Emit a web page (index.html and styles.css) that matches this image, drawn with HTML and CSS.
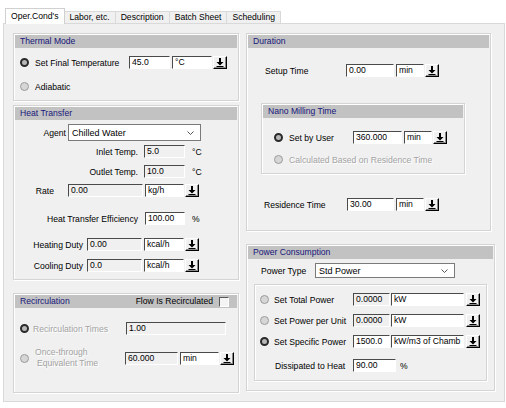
FILE: index.html
```html
<!DOCTYPE html>
<html>
<head>
<meta charset="utf-8">
<link rel="stylesheet" href="styles.css">
</head>
<body>
<div class="window">
  <div class="tabstrip">
    <div class="tab active">Oper.Cond's</div>
    <div class="tab">Labor, etc.</div>
    <div class="tab">Description</div>
    <div class="tab">Batch Sheet</div>
    <div class="tab">Scheduling</div>
  </div>
  <div class="panel">
    <div class="col col-left">
      <section class="group thermal">
        <div class="ghead">Thermal Mode</div>
        <div class="row th-r1">
          <span class="radio on"></span>
          <span class="lbl l-final">Set Final Temperature</span>
          <span class="fld w41">45.0</span>
          <span class="fld u40">°C</span>
          <span class="dd"><svg width="8" height="9" viewBox="0 0 8 9"><path d="M3 0h2v4h2.5L4 7.5 0.5 4H3z M0.5 8h7v1h-7z" fill="#000"/></svg></span>
        </div>
        <div class="row th-r2">
          <span class="radio"></span>
          <span class="lbl l-after-radio">Adiabatic</span>
        </div>
      </section>

      <section class="group heat">
        <div class="ghead">Heat Transfer</div>
        <div class="row agent">
          <span class="lbl rl w51">Agent</span>
          <span class="select sel-agent">Chilled Water<svg width="7" height="4" viewBox="0 0 7 4"><path d="M0.5 0.5L3.5 3.5 6.5 0.5" stroke="#555" fill="none"/></svg></span>
        </div>
        <div class="row ht-inlet">
          <span class="lbl rl w123">Inlet Temp.</span>
          <span class="fld dis w41 g6">5.0</span>
          <span class="unit-txt">°C</span>
        </div>
        <div class="row ht-outlet">
          <span class="lbl rl w123">Outlet Temp.</span>
          <span class="fld dis w41 g6">10.0</span>
          <span class="unit-txt">°C</span>
        </div>
        <div class="row ht-rate">
          <span class="lbl rl w39">Rate</span>
          <span class="fld dis w75 g14">0.00</span>
          <span class="fld u39">kg/h</span>
          <span class="dd"><svg width="8" height="9" viewBox="0 0 8 9"><path d="M3 0h2v4h2.5L4 7.5 0.5 4H3z M0.5 8h7v1h-7z" fill="#000"/></svg></span>
        </div>
        <div class="row ht-eff">
          <span class="lbl rl w123">Heat Transfer Efficiency</span>
          <span class="fld w40 g7">100.00</span>
          <span class="unit-txt">%</span>
        </div>
        <div class="row ht-heat">
          <span class="lbl rl w68">Heating Duty</span>
          <span class="fld dis w55 g4">0.00</span>
          <span class="fld u40">kcal/h</span>
          <span class="dd"><svg width="8" height="9" viewBox="0 0 8 9"><path d="M3 0h2v4h2.5L4 7.5 0.5 4H3z M0.5 8h7v1h-7z" fill="#000"/></svg></span>
        </div>
        <div class="row ht-cool">
          <span class="lbl rl w68">Cooling Duty</span>
          <span class="fld dis w55 g4">0.0</span>
          <span class="fld u40">kcal/h</span>
          <span class="dd"><svg width="8" height="9" viewBox="0 0 8 9"><path d="M3 0h2v4h2.5L4 7.5 0.5 4H3z M0.5 8h7v1h-7z" fill="#000"/></svg></span>
        </div>
      </section>

      <section class="group recirc">
        <div class="ghead split">
          <span>Recirculation</span>
          <span class="flow">Flow Is Recirculated<span class="check"></span></span>
        </div>
        <div class="row rc-r1">
          <span class="radio on"></span>
          <span class="lbl disabled l-times">Recirculation Times</span>
          <span class="fld dis w100">1.00</span>
        </div>
        <div class="row rc-r2">
          <span class="radio"></span>
          <span class="lbl disabled l-once"><span class="line">Once-through</span><span class="line ind">Equivalent Time</span></span>
          <span class="fld dis w53">60.000</span>
          <span class="fld u39">min</span>
          <span class="dd"><svg width="8" height="9" viewBox="0 0 8 9"><path d="M3 0h2v4h2.5L4 7.5 0.5 4H3z M0.5 8h7v1h-7z" fill="#000"/></svg></span>
        </div>
      </section>
    </div>

    <div class="col col-right">
      <section class="group duration">
        <div class="ghead">Duration</div>
        <div class="row du-setup">
          <span class="lbl w81">Setup Time</span>
          <span class="fld w48">0.00</span>
          <span class="fld u28">min</span>
          <span class="dd"><svg width="8" height="9" viewBox="0 0 8 9"><path d="M3 0h2v4h2.5L4 7.5 0.5 4H3z M0.5 8h7v1h-7z" fill="#000"/></svg></span>
        </div>
        <section class="group nano">
          <div class="ghead">Nano Milling Time</div>
          <div class="row na-user">
            <span class="radio on"></span>
            <span class="lbl l-user">Set by User</span>
            <span class="fld w49">360.000</span>
            <span class="fld u28">min</span>
            <span class="dd"><svg width="8" height="9" viewBox="0 0 8 9"><path d="M3 0h2v4h2.5L4 7.5 0.5 4H3z M0.5 8h7v1h-7z" fill="#000"/></svg></span>
          </div>
          <div class="row na-calc">
            <span class="radio"></span>
            <span class="lbl disabled l-after-radio">Calculated Based on Residence Time</span>
          </div>
        </section>
        <div class="row du-res">
          <span class="lbl w83">Residence Time</span>
          <span class="fld w47">30.00</span>
          <span class="fld u28">min</span>
          <span class="dd"><svg width="8" height="9" viewBox="0 0 8 9"><path d="M3 0h2v4h2.5L4 7.5 0.5 4H3z M0.5 8h7v1h-7z" fill="#000"/></svg></span>
        </div>
      </section>

      <section class="group power">
        <div class="ghead">Power Consumption</div>
        <div class="row pw-type">
          <span class="lbl w54">Power Type</span>
          <span class="select sel-power">Std Power<svg width="7" height="4" viewBox="0 0 7 4"><path d="M0.5 0.5L3.5 3.5 6.5 0.5" stroke="#555" fill="none"/></svg></span>
        </div>
        <div class="inner">
          <div class="row pw-total">
            <span class="radio"></span>
            <span class="lbl l-pw">Set Total Power</span>
            <span class="fld dis w37">0.0000</span>
            <span class="fld u73">kW</span>
            <span class="dd"><svg width="8" height="9" viewBox="0 0 8 9"><path d="M3 0h2v4h2.5L4 7.5 0.5 4H3z M0.5 8h7v1h-7z" fill="#000"/></svg></span>
          </div>
          <div class="row pw-unit">
            <span class="radio"></span>
            <span class="lbl l-pw">Set Power per Unit</span>
            <span class="fld dis w37">0.0000</span>
            <span class="fld u73">kW</span>
            <span class="dd"><svg width="8" height="9" viewBox="0 0 8 9"><path d="M3 0h2v4h2.5L4 7.5 0.5 4H3z M0.5 8h7v1h-7z" fill="#000"/></svg></span>
          </div>
          <div class="row pw-spec">
            <span class="radio on"></span>
            <span class="lbl l-pw">Set Specific Power</span>
            <span class="fld w37">1500.0</span>
            <span class="fld u73">kW/m3 of Chamb</span>
            <span class="dd"><svg width="8" height="9" viewBox="0 0 8 9"><path d="M3 0h2v4h2.5L4 7.5 0.5 4H3z M0.5 8h7v1h-7z" fill="#000"/></svg></span>
          </div>
          <div class="row pw-diss">
            <span class="lbl w78">Dissipated to Heat</span>
            <span class="fld w43">90.00</span>
            <span class="unit-txt pct">%</span>
          </div>
        </div>
      </section>
    </div>
  </div>
</div>
</body>
</html>
```

FILE: styles.css
```css
html, body {
  margin: 0;
  background: #fff;
}
body {
  font-family: "Liberation Sans", Arial, sans-serif;
  font-size: 8.6px;
  color: #000;
}
.window {
  width: 506px;
  height: 408px;
  overflow: hidden;
}

/* tabs */
.tabstrip {
  display: flex;
  align-items: flex-end;
  height: 23px;
  padding-left: 5px;
  box-sizing: border-box;
}
.tab {
  box-sizing: border-box;
  height: 12px;
  line-height: 10px;
  padding: 0 5px;
  border: 1px solid #d9d9d9;
  border-bottom: none;
  background: #f0f0f0;
  margin-left: -1px;
  white-space: nowrap;
}
.tab.active {
  height: 16px;
  line-height: 14px;
  margin-left: 0;
  margin-bottom: -1px;
  background: #fff;
  border-color: #d0d0d0;
  position: relative;
  z-index: 1;
}

/* panel */
.panel {
  box-sizing: border-box;
  width: 502px;
  height: 379px;
  margin-left: 3px;
  border: 1px solid #d9d9d9;
  background: #f0f0f0;
  display: flex;
  align-items: flex-start;
  padding: 9px 0 0 9px;
}
.col {
  display: flex;
  flex-direction: column;
}
.col-left { width: 226px; }
.col-right { width: 249px; margin-left: 7px; }

/* group boxes */
.group {
  box-sizing: border-box;
  border: 1px solid #d4d4d4;
  padding: 1px;
  box-shadow: inset 1px 1px 0 #fff, 1px 1px 0 #fff;
}
.ghead {
  height: 13px;
  line-height: 13px;
  background: #c2c2c2;
  color: #16167a;
  padding-left: 5px;
  white-space: nowrap;
}
.ghead.split {
  display: flex;
  justify-content: space-between;
  align-items: center;
}
.flow {
  display: flex;
  align-items: center;
  color: #000;
}
.check {
  box-sizing: border-box;
  width: 10px;
  height: 10px;
  margin: 0 8px 0 6px;
  background: #f4f4f4;
  border: 1px solid;
  border-color: #5a5a5a #fff #fff #5a5a5a;
}

.thermal { height: 68px; }
.heat { height: 175px; margin-top: 4px; }
.recirc { height: 100px; margin-top: 13px; }
.duration { width: 245px; height: 198px; }
.power { width: 249px; height: 147px; margin-top: 13px; }
.nano {
  width: 204px;
  height: 71px;
  margin: 26px 0 0 13px;
}
.inner {
  box-sizing: border-box;
  width: 233px;
  height: 97px;
  margin: 6px 0 0 6px;
  border: 1px solid #d4d4d4;
  box-shadow: inset 1px 1px 0 #fff, 1px 1px 0 #fff;
}

/* rows */
.row {
  display: flex;
  align-items: center;
  height: 13px;
  white-space: nowrap;
}
.th-r1 { margin-top: 8px; padding-left: 5px; }
.th-r2 { margin-top: 11px; padding-left: 5px; }

.agent { margin-top: 4px; height: 17px; }
.ht-inlet { margin-top: 4px; }
.ht-outlet { margin-top: 7px; }
.ht-rate { margin-top: 6px; }
.ht-eff { margin-top: 15px; }
.ht-heat { margin-top: 13px; }
.ht-cool { margin-top: 8px; }

.rc-r1 { margin-top: 14px; padding-left: 5px; }
.rc-r2 { margin-top: 11px; height: 24px; padding-left: 5px; }

.du-setup { margin-top: 16px; padding-left: 17px; }
.na-user { margin-top: 13px; padding-left: 11px; }
.na-calc { margin-top: 9px; padding-left: 11px; }
.du-res { margin-top: 24px; padding-left: 16px; }

.pw-type { margin-top: 4px; height: 15px; padding-left: 13px; }
.pw-total { margin-top: 8px; padding-left: 5px; }
.pw-unit { margin-top: 8px; padding-left: 5px; }
.pw-spec { margin-top: 8px; padding-left: 5px; }
.pw-diss { margin-top: 11px; padding-left: 20px; }

/* labels */
.lbl { display: inline-block; }
.rl { text-align: right; }
.w39 { width: 39px; }
.w51 { width: 51px; margin-right: 2px; }
.w54 { width: 54px; }
.w68 { width: 68px; }
.w78 { width: 78px; }
.w81 { width: 81px; }
.w83 { width: 83px; }
.w123 { width: 123px; }
.l-final { width: 94px; margin-left: 6px; }
.l-after-radio { margin-left: 6px; }
.l-times { width: 93px; margin-left: 4px; }
.l-once { width: 90px; margin-left: 6px; }
.l-user { width: 64px; margin-left: 6px; }
.l-pw { width: 79px; margin-left: 5px; }
.line { display: block; line-height: 11px; }
.ind { padding-left: 2px; }
.disabled {
  color: #a3a3a3;
  text-shadow: 1px 1px 0 #fff;
}

/* radios */
.radio {
  box-sizing: border-box;
  flex: none;
  width: 9px;
  height: 9px;
  border-radius: 50%;
  background: #d6d6d6;
  border: 1px solid #9c9c9c;
}
.radio.on {
  border: 2px solid #2a2a2a;
  background: #b8b8b8;
}

/* fields */
.fld {
  box-sizing: border-box;
  flex: none;
  height: 13px;
  line-height: 11px;
  padding-left: 2px;
  background: #fff;
  border: 1px solid;
  border-color: #4a4a4a #fff #fff #4a4a4a;
  overflow: hidden;
  white-space: nowrap;
}
.fld.dis { background: #f0f0f0; }
.w37 { width: 37px; }
.w40 { width: 40px; }
.w41 { width: 41px; }
.w43 { width: 43px; }
.w47 { width: 47px; }
.w48 { width: 48px; }
.w49 { width: 49px; }
.w53 { width: 53px; }
.w55 { width: 55px; }
.w75 { width: 75px; }
.w100 { width: 100px; }
.g4 { margin-left: 4px; }
.g6 { margin-left: 6px; }
.g7 { margin-left: 7px; }
.g14 { margin-left: 14px; }
.u28 { width: 28px; margin-left: 2px; }
.u39 { width: 39px; margin-left: 2px; }
.u40 { width: 40px; margin-left: 2px; }
.u73 { width: 73px; margin-left: 1px; }
.unit-txt { margin-left: 7px; }
.unit-txt.pct { margin-left: 4px; }

/* dropdown button */
.dd {
  box-sizing: border-box;
  flex: none;
  width: 14px;
  height: 13px;
  margin-left: 1px;
  background: #f0f0f0;
  border: 1px solid;
  border-color: #fff #000 #000 #fff;
  box-shadow: inset -1px -1px 0 #8a8a8a;
  display: flex;
  align-items: center;
  justify-content: center;
}
.pw-total .dd, .pw-unit .dd, .pw-spec .dd { margin-left: 2px; }

/* selects */
.select {
  box-sizing: border-box;
  flex: none;
  display: flex;
  align-items: center;
  justify-content: space-between;
  background: #fff;
  border: 1px solid #7a7a7a;
  padding: 0 6px 0 3px;
  font-size: 9px;
}
.sel-agent { width: 133px; height: 17px; }
.sel-power { width: 140px; height: 15px; margin-left: 0; }
```
